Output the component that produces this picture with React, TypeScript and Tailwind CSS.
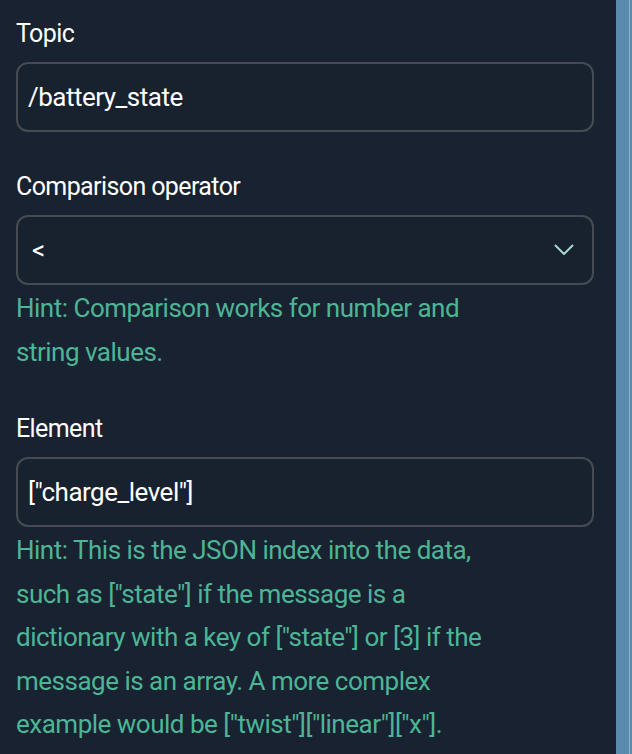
type FieldProps = {
  label: string;
  children: React.ReactNode;
  hint?: string;
};

function Field({ label, children, hint }: FieldProps) {
  return (
    <div className="flex flex-col">
      <label className="mb-[7px] text-[25px] leading-[43px] tracking-[-0.6px] text-white">
        {label}
      </label>
      {children}
      {hint && (
        <p className="mt-[2px] max-w-[500px] text-[26px] leading-[43.5px] tracking-[-0.5px] text-[#4db596]">
          {hint}
        </p>
      )}
    </div>
  );
}

const boxClass =
  "flex h-[70px] w-full items-center rounded-[12px] border-2 border-[#464b53] bg-[#18222f] pl-[10px] pr-[18px] text-[26px] tracking-[-0.5px] text-white";

export default function App() {
  return (
    <div
      className="flex h-[754px] w-[632px] overflow-hidden bg-[#182230]"
      style={{ fontFamily: "Roboto, 'Liberation Sans', sans-serif" }}
    >
      <div className="flex flex-1 flex-col gap-[33px] pl-[16px] pr-[22px] pt-[12px]">
        {/* Topic */}
        <Field label="Topic">
          <div className={boxClass}>/battery_state</div>
        </Field>

        {/* Comparison operator */}
        <Field
          label="Comparison operator"
          hint="Hint: Comparison works for number and string values."
        >
          <div className={`${boxClass} justify-between !pl-[14px]`}>
            <span>&lt;</span>
            <svg width="20" height="12" viewBox="0 0 20 12" fill="none">
              <polyline
                points="1.5,1.5 10,10 18.5,1.5"
                stroke="#a6d8cd"
                strokeWidth="2"
                strokeLinecap="round"
                strokeLinejoin="round"
              />
            </svg>
          </div>
        </Field>

        {/* Element */}
        <Field
          label="Element"
          hint={`Hint: This is the JSON index into the data, such as ["state"] if the message is a dictionary with a key of ["state"] or [3] if the message is an array. A more complex example would be ["twist"]["linear"]["x"].`}
        >
          <div className={boxClass}>["charge_level"]</div>
        </Field>
      </div>

      {/* scrollbar strip */}
      <div className="flex h-full w-[16px] shrink-0">
        <div className="h-full w-[13px] bg-[#5a8aad]" />
        <div className="h-full w-[1px] bg-[#8fb3cc]" />
        <div className="h-full w-[2px] bg-[#5a8aad]" />
      </div>
    </div>
  );
}
